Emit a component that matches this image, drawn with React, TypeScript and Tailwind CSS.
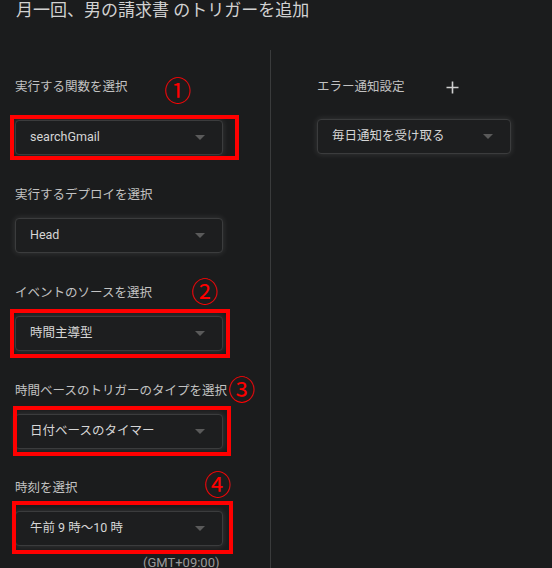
import { ReactNode } from "react";

type Mark = {
  num: string;
  pos: string;
  box: string;
};

const Select = ({ value, width = "w-[208px]" }: { value: string; width?: string }) => (
  <div
    className={`${width} h-[35px] flex items-center justify-between pl-[14px] pr-[17px] rounded-[4px] bg-[#1d1e1f] border border-[#3b3c3d] shadow-[0_0_6px_rgba(255,255,255,0.13)] text-[12.5px] text-[#d6d6d6]`}
  >
    <span>{value}</span>
    <svg width="10" height="5" viewBox="0 0 10 5">
      <path d="M0 0h10L5 5z" fill="#5a5a5a" />
    </svg>
  </div>
);

const Field = ({ label, value, mark, className = "" }: { label: string; value: string; mark?: Mark; className?: string }) => (
  <div className={`relative ${className}`}>
    <div className="h-5 leading-5 text-[12.5px] text-[#c2c2c2]">{label}</div>
    <div className="relative mt-[13px]">
      <Select value={value} />
      {mark && <div className={`absolute border-[4px] border-[#f00] ${mark.box}`} />}
    </div>
    {mark && (
      <span className={`absolute text-[27px] leading-none text-[#f00] ${mark.pos}`}>{mark.num}</span>
    )}
  </div>
);

const Column = ({ children, className }: { children: ReactNode; className: string }) => (
  <div className={className}>{children}</div>
);

export default function App() {
  return (
    <div
      className="w-[552px] h-[568px] overflow-hidden bg-[#1b1c1d] flex flex-col"
      style={{ fontFamily: 'Roboto, "Noto Sans CJK JP", sans-serif' }}
    >
      <h1 className="pl-4 h-6 leading-6 text-[17px] text-[#d2d2d2] font-normal -mt-[2px]">
        月一回、男の請求書 のトリガーを追加
      </h1>
      <div className="flex flex-1 mt-[28px]">
        <Column className="w-[271px] border-r border-[#3a3b3c] pl-[15px] pt-[27px]">
          <Field
            label="実行する関数を選択"
            value="searchGmail"
            className="[&>div:nth-child(2)]:mt-[23px]"
            mark={{ num: "①", pos: "left-[149px] top-[2px]", box: "-left-[5px] -top-[5px] w-[229px] h-[45px]" }}
          />
          <Field label="実行するデプロイを選択" value="Head" className="mt-[30px]" />
          <Field
            label="イベントのソースを選択"
            value="時間主導型"
            className="mt-[30px]"
            mark={{ num: "②", pos: "left-[176px] -top-[3px]", box: "-left-[5px] -top-[7px] w-[220px] h-[49px]" }}
          />
          <Field
            label="時間ベースのトリガーのタイプを選択"
            value="日付ベースのタイマー"
            className="mt-[30px]"
            mark={{ num: "③", pos: "left-[213px] -top-[3px]", box: "-left-[2px] -top-[8px] w-[218px] h-[50px]" }}
          />
          <Field
            label="時刻を選択"
            value="午前 9 時〜10 時"
            className="mt-[29px]"
            mark={{ num: "④", pos: "left-[189px] -top-[5px]", box: "-left-[3px] -top-[10px] w-[221px] h-[53px]" }}
          />
          <div className="pl-[128px] mt-[9px] text-[13px] leading-4 text-[#9a9a9a]">(GMT+09:00)</div>
        </Column>
        <Column className="flex-1 pl-[46px] pt-[27px]">
          <div className="flex items-center h-5">
            <span className="text-[12.5px] leading-5 text-[#c2c2c2]">エラー通知設定</span>
            <svg className="ml-[41px]" width="13" height="13" viewBox="0 0 13 13">
              <path d="M6.5 0.5v12M0.5 6.5h12" stroke="#d0d0d0" strokeWidth="1.6" />
            </svg>
          </div>
          <div className="mt-[22px]">
            <Select value="毎日通知を受け取る" width="w-[194px]" />
          </div>
        </Column>
      </div>
    </div>
  );
}
